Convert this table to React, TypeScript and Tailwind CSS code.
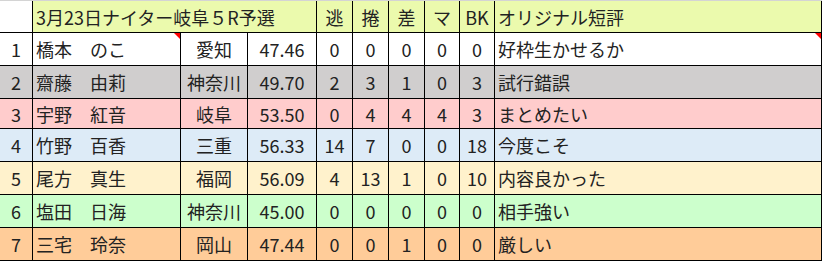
const rows = [
  { no: 1, name: "橋本　のこ", pref: "愛知", time: "47.46", a: 0, b: 0, c: 0, d: 0, bk: 0, note: "好枠生かせるか", bg: "bg-white", h: "h-[33px]", mark: true },
  { no: 2, name: "齋藤　由莉", pref: "神奈川", time: "49.70", a: 2, b: 3, c: 1, d: 0, bk: 3, note: "試行錯誤", bg: "bg-[#d0cece]", h: "h-[33px]" },
  { no: 3, name: "宇野　紅音", pref: "岐阜", time: "53.50", a: 0, b: 4, c: 4, d: 4, bk: 3, note: "まとめたい", bg: "bg-[#ffcccc]", h: "h-[30px]" },
  { no: 4, name: "竹野　百香", pref: "三重", time: "56.33", a: 14, b: 7, c: 0, d: 0, bk: 18, note: "今度こそ", bg: "bg-[#ddebf7]", h: "h-[33px]" },
  { no: 5, name: "尾方　真生", pref: "福岡", time: "56.09", a: 4, b: 13, c: 1, d: 0, bk: 10, note: "内容良かった", bg: "bg-[#fff2cc]", h: "h-[33px]" },
  { no: 6, name: "塩田　日海", pref: "神奈川", time: "45.00", a: 0, b: 0, c: 0, d: 0, bk: 0, note: "相手強い", bg: "bg-[#ccffcc]", h: "h-[33px]" },
  { no: 7, name: "三宅　玲奈", pref: "岡山", time: "47.44", a: 0, b: 0, c: 1, d: 0, bk: 0, note: "厳しい", bg: "bg-[#ffcc99]", h: "h-[33px]" },
];

const cell = "flex items-center border-r border-b border-black";

function Mark() {
  return (
    <span className="absolute right-0 top-0 h-0 w-0 border-l-[6px] border-t-[6px] border-l-transparent border-t-[#ff0000]" />
  );
}

export default function App() {
  return (
    <div
      className="h-[262px] w-[823px] bg-white text-[18px] leading-none text-[#222]"
      style={{ fontFamily: '"Noto Sans CJK JP", "Noto Sans", sans-serif' }}
    >
      <div className="grid w-[822px] grid-cols-[33px_148px_67px_69px_36px_36px_36px_35px_35px_327px] border-t border-[#d4d4d4]">
        <div className="h-[32px] border-r border-b border-black bg-white" />
        <div className={`${cell} col-span-3 bg-[#ebfaad] pl-[3px]`}>3月23日ナイター岐阜５R予選</div>
        <div className={`${cell} justify-center bg-[#ebfaad]`}>逃</div>
        <div className={`${cell} justify-center bg-[#ebfaad]`}>捲</div>
        <div className={`${cell} justify-center bg-[#ebfaad]`}>差</div>
        <div className={`${cell} justify-center bg-[#ebfaad]`}>マ</div>
        <div className={`${cell} justify-center bg-[#ebfaad]`}>BK</div>
        <div className={`${cell} bg-[#ebfaad] pl-[3px]`}>オリジナル短評</div>

        {rows.map((r) => (
          <div key={r.no} className={`contents`}>
            <div className={`${cell} ${r.bg} ${r.h} justify-center`}>{r.no}</div>
            <div className={`${cell} ${r.bg} relative pl-[3px]`}>
              {r.name}
              {r.mark && <Mark />}
            </div>
            <div className={`${cell} ${r.bg} justify-center`}>{r.pref}</div>
            <div className={`${cell} ${r.bg} justify-center`}>{r.time}</div>
            <div className={`${cell} ${r.bg} justify-center`}>{r.a}</div>
            <div className={`${cell} ${r.bg} justify-center`}>{r.b}</div>
            <div className={`${cell} ${r.bg} justify-center`}>{r.c}</div>
            <div className={`${cell} ${r.bg} justify-center`}>{r.d}</div>
            <div className={`${cell} ${r.bg} justify-center`}>{r.bk}</div>
            <div className={`${cell} ${r.bg} relative pl-[3px]`}>
              {r.note}
              {r.mark && <Mark />}
            </div>
          </div>
        ))}
      </div>
    </div>
  );
}
